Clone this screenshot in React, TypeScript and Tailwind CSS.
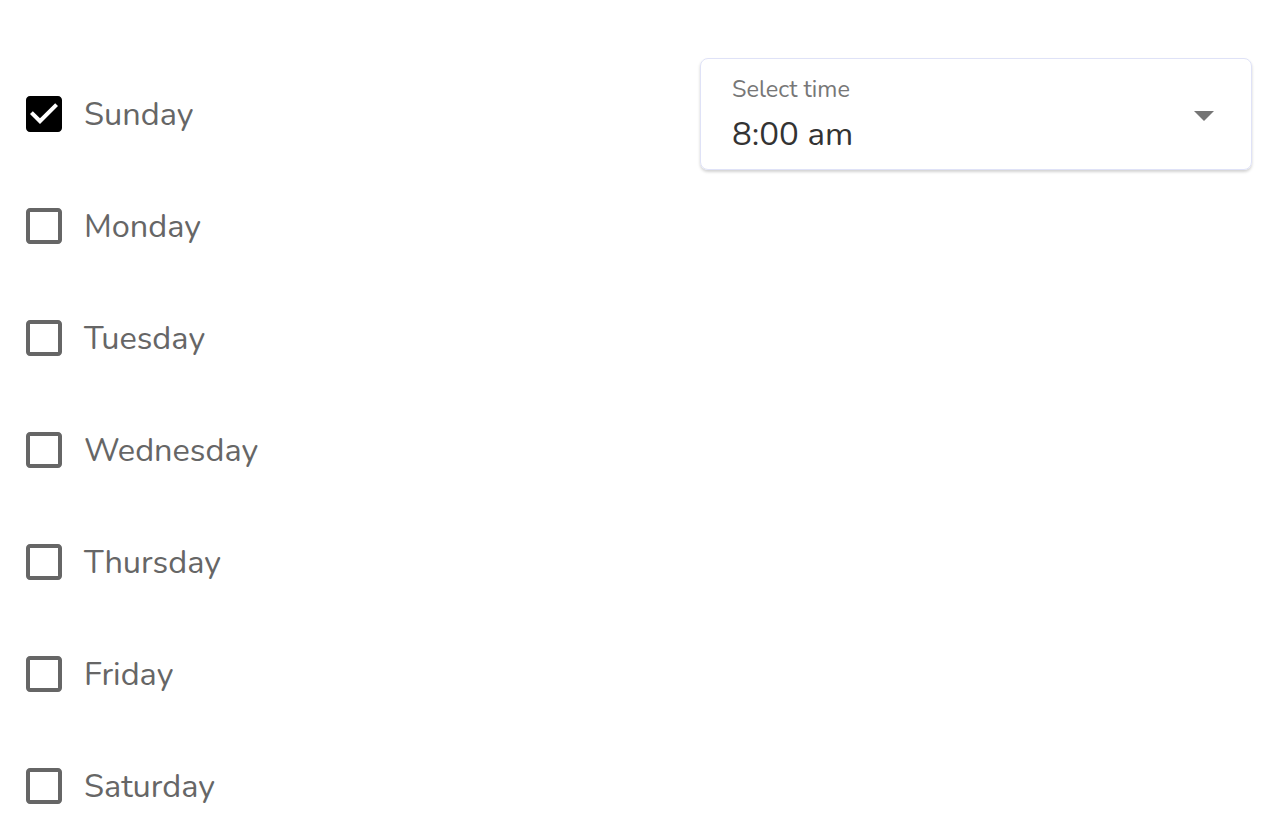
import React, { useState } from "react";

const days = ["Sunday", "Monday", "Tuesday", "Wednesday", "Thursday", "Friday", "Saturday"];

function Box({ checked }: { checked: boolean }) {
  return (
    <svg width="48" height="48" viewBox="0 0 24 24" className="shrink-0">
      {checked ? (
        <path
          fill="#000"
          d="M19 3H5c-1.11 0-2 .9-2 2v14c0 1.1.89 2 2 2h14c1.11 0 2-.9 2-2V5c0-1.1-.89-2-2-2zm-9 14l-5-5 1.41-1.41L10 14.17l7.59-7.59L19 8l-9 9z"
        />
      ) : (
        <path
          fill="#666666"
          d="M19 5v14H5V5h14m0-2H5c-1.1 0-2 .9-2 2v14c0 1.1.9 2 2 2h14c1.1 0 2-.9 2-2V5c0-1.1-.9-2-2-2z"
        />
      )}
    </svg>
  );
}

export default function App() {
  const [checked, setChecked] = useState<boolean[]>([true, false, false, false, false, false, false]);
  return (
    <div
      className="w-[1278px] h-[818px] bg-white overflow-hidden flex items-start pt-[58px] pl-[20px]"
      style={{ fontFamily: "Nunito, Lato, 'Noto Sans', sans-serif" }}
    >
      <div className="w-[680px] shrink-0 flex flex-col">
        {days.map((d, i) => (
          <label key={d} className="h-[112px] shrink-0 flex items-center gap-[16px] cursor-pointer">
            <input
              type="checkbox"
              className="hidden"
              checked={checked[i]}
              onChange={() => setChecked((c) => c.map((v, j) => (j === i ? !v : v)))}
            />
            <Box checked={checked[i]} />
            <span className="text-[32.5px] text-[#666666] leading-none">{d}</span>
          </label>
        ))}
      </div>
      <div className="w-[552px] shrink-0">
        <div className="h-[112px] rounded-[8px] border-[1.5px] border-[#dfe2f7] shadow-[0_2px_3px_rgba(0,0,0,0.18)] flex items-center pl-[31px] pr-[23px]">
          <div className="flex-1 flex flex-col">
            <span className="text-[23.5px] leading-[28px] text-[#777777] mt-[3px]">Select time</span>
            <span className="text-[33px] leading-[44px] text-[#333333] mt-[10px]">8:00 am</span>
          </div>
          <svg width="48" height="48" viewBox="0 0 24 24" className="mt-[2px]">
            <path fill="#757575" d="M7 10l5 5 5-5z" />
          </svg>
        </div>
      </div>
    </div>
  );
}
